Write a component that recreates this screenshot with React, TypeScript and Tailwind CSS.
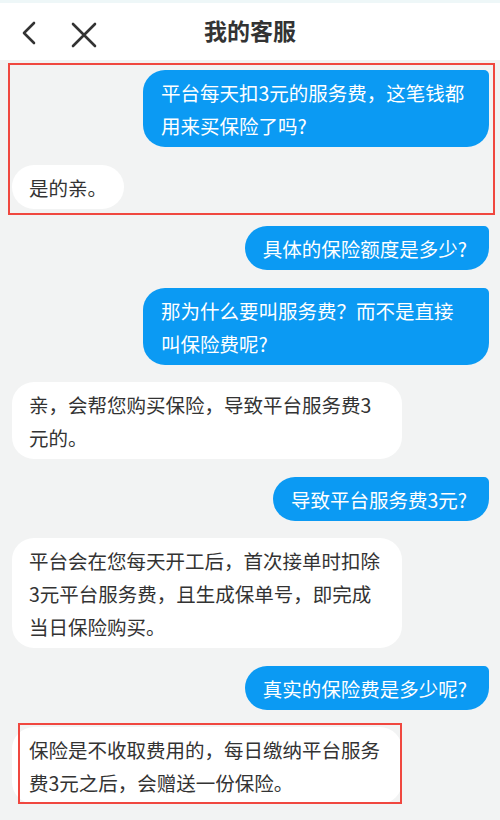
import type { ReactNode } from 'react';

type Msg = { from: 'me' | 'cs'; text: string };

const messages: Msg[] = [
  { from: 'me', text: '平台每天扣3元的服务费，这笔钱都用来买保险了吗?' },
  { from: 'cs', text: '是的亲。' },
  { from: 'me', text: '具体的保险额度是多少?' },
  { from: 'me', text: '那为什么要叫服务费？而不是直接叫保险费呢?' },
  { from: 'cs', text: '亲，会帮您购买保险，导致平台服务费3元的。' },
  { from: 'me', text: '导致平台服务费3元?' },
  { from: 'cs', text: '平台会在您每天开工后，首次接单时扣除3元平台服务费，且生成保单号，即完成当日保险购买。' },
  { from: 'me', text: '真实的保险费是多少呢?' },
  { from: 'cs', text: '保险是不收取费用的，每日缴纳平台服务费3元之后，会赠送一份保险。' },
];

function Bubble({ msg }: { msg: Msg }) {
  if (msg.from === 'me') {
    return (
      <div className="flex justify-end">
        <div className="max-w-[346px] bg-[#0b9af3] text-white rounded-[22px] rounded-tr-[5px] pl-[18px] pr-[22px] pt-[6px] pb-[5px]">
          {msg.text}
        </div>
      </div>
    );
  }
  return (
    <div className="flex justify-start">
      <div className="max-w-[390px] bg-white text-[#333] rounded-[22px] px-[17px] pt-[6px] pb-[5px]">
        {msg.text}
      </div>
    </div>
  );
}

function Highlight({ className }: { className: string }): ReactNode {
  return <div className={`absolute border-2 border-[#f0473f] pointer-events-none ${className}`} />;
}

export default function App() {
  return (
    <div
      className="relative w-[500px] h-[820px] overflow-hidden bg-[#f2f3f3]"
      style={{ fontFamily: '"Noto Sans CJK SC", "Noto Sans", sans-serif' }}
    >
      {/* header */}
      <div className="h-[60px] bg-white border-t-[3px] border-[#eef7f8] flex items-center relative">
        <svg className="absolute left-[20px] top-[17px]" width="18" height="26" viewBox="0 0 18 26" fill="none">
          <path d="M14 3 L4 13 L14 23" stroke="#333" strokeWidth="2.6" strokeLinecap="round" strokeLinejoin="round" />
        </svg>
        <svg className="absolute left-[70px] top-[18px]" width="28" height="28" viewBox="0 0 28 28" fill="none">
          <path d="M3 3 L25 25 M25 3 L3 25" stroke="#333" strokeWidth="2.6" strokeLinecap="round" />
        </svg>
        <h1 className="flex-1 text-center text-[23px] font-bold text-[#333] -mt-[3px]">我的客服</h1>
      </div>

      {/* messages */}
      <div className="flex flex-col gap-[17.5px] pt-[10px] pl-[12px] pr-[11px] text-[19.5px] leading-[33px]">
        {messages.map((m, i) => (
          <Bubble key={i} msg={m} />
        ))}
      </div>

      <Highlight className="left-[8px] top-[63px] w-[487px] h-[152px]" />
      <Highlight className="left-[18px] top-[723px] w-[384px] h-[81px]" />
    </div>
  );
}
